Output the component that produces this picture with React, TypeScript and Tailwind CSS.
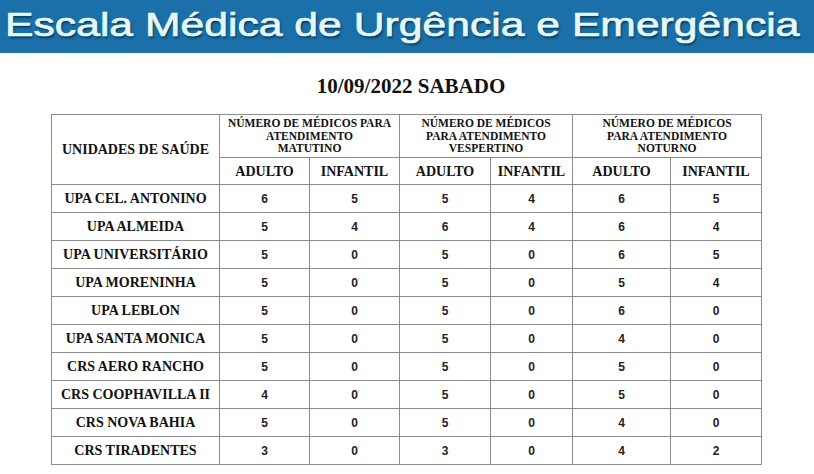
const rows: [string, number[]][] = [
  ["UPA CEL. ANTONINO", [6, 5, 5, 4, 6, 5]],
  ["UPA ALMEIDA", [5, 4, 6, 4, 6, 4]],
  ["UPA UNIVERSITÁRIO", [5, 0, 5, 0, 6, 5]],
  ["UPA MORENINHA", [5, 0, 5, 0, 5, 4]],
  ["UPA LEBLON", [5, 0, 5, 0, 6, 0]],
  ["UPA SANTA MONICA", [5, 0, 5, 0, 4, 0]],
  ["CRS AERO RANCHO", [5, 0, 5, 0, 5, 0]],
  ["CRS COOPHAVILLA II", [4, 0, 5, 0, 5, 0]],
  ["CRS NOVA BAHIA", [5, 0, 5, 0, 4, 0]],
  ["CRS TIRADENTES", [3, 0, 3, 0, 4, 2]],
];

const groups = [
  ["NÚMERO DE MÉDICOS PARA", "ATENDIMENTO", "MATUTINO"],
  ["NÚMERO DE MÉDICOS", "PARA ATENDIMENTO", "VESPERTINO"],
  ["NÚMERO DE MÉDICOS", "PARA ATENDIMENTO", "NOTURNO"],
];

const cell = "border border-[#8c8c8c] text-center align-middle p-0";

export default function App() {
  return (
    <div className="w-[814px] h-[474px] bg-white overflow-hidden">
      <div className="h-[53px] bg-[#1b70a9] overflow-hidden">
        <div className="origin-left scale-x-[1.255] pl-[4px] pt-[2px] font-['Liberation_Sans',Arial,sans-serif] text-[34px] leading-[44px] text-[#e4f9fd] whitespace-nowrap [-webkit-text-stroke:0.7px_#e4f9fd] [text-shadow:1px_2px_2px_#0b3350]">
          Escala Médica de Urgência e Emergência
        </div>
      </div>

      <div className="font-['Liberation_Serif','Times_New_Roman',serif] text-[#111]">
        <h1 className="mt-[21px] text-center text-[21px] leading-[24px] font-bold pl-[8px]">
          10/09/2022 SABADO
        </h1>

        <table className="mt-[16px] ml-[51px] w-[710px] table-fixed border-collapse font-bold">
          <colgroup>
            <col className="w-[168px]" />
            <col className="w-[90px]" />
            <col className="w-[90px]" />
            <col className="w-[91px]" />
            <col className="w-[82px]" />
            <col className="w-[98px]" />
            <col className="w-[91px]" />
          </colgroup>
          <thead>
            <tr className="h-[43px]">
              <th rowSpan={2} className={`${cell} text-[14px]`}>
                UNIDADES DE SAÚDE
              </th>
              {groups.map((g, i) => (
                <th key={i} colSpan={2} className={`${cell} text-[11.5px] leading-[12.5px]`}>
                  {g.map((l) => (
                    <div key={l}>{l}</div>
                  ))}
                </th>
              ))}
            </tr>
            <tr className="h-[27px]">
              {[0, 1, 2].map((i) => (
                <>
                  <th key={`a${i}`} className={`${cell} text-[14px]`}>ADULTO</th>
                  <th key={`i${i}`} className={`${cell} text-[14px]`}>INFANTIL</th>
                </>
              ))}
            </tr>
          </thead>
          <tbody>
            {rows.map(([name, vals]) => (
              <tr key={name} className="h-[28px]">
                <td className={`${cell} text-[14px] whitespace-nowrap`}>{name}</td>
                {vals.map((v, j) => (
                  <td
                    key={j}
                    className={`${cell} font-['Liberation_Sans',Arial,sans-serif] text-[12px] text-[#222]`}
                  >
                    {v}
                  </td>
                ))}
              </tr>
            ))}
          </tbody>
        </table>
      </div>
    </div>
  );
}
